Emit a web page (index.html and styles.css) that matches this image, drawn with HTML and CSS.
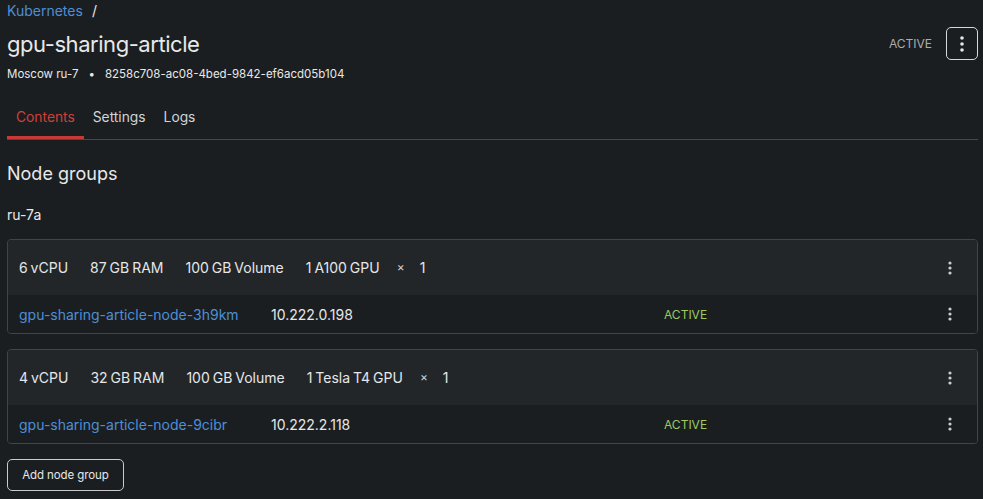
FILE: index.html
```html
<!DOCTYPE html>
<html>
<head>
<meta charset="utf-8">
<link rel="stylesheet" href="styles.css">
</head>
<body>
<div class="page">
  <div class="crumbs"><a class="crumb-link">Kubernetes</a><span class="sep">/</span></div>
  <div class="head">
    <div class="head-left">
      <h1 class="title">gpu-sharing-article</h1>
      <div class="meta"><span>Moscow ru-7</span><span class="dot">•</span><span>8258c708-ac08-4bed-9842-ef6acd05b104</span></div>
    </div>
    <div class="head-right">
      <span class="status">ACTIVE</span>
      <button class="kebab-btn"><svg width="4" height="16" viewBox="0 0 4 16"><circle cx="2" cy="2" r="1.8" fill="#e6e6e6"/><circle cx="2" cy="8" r="1.8" fill="#e6e6e6"/><circle cx="2" cy="14" r="1.8" fill="#e6e6e6"/></svg></button>
    </div>
  </div>
  <nav class="tabs">
    <span class="tab active">Contents</span>
    <span class="tab">Settings</span>
    <span class="tab">Logs</span>
  </nav>
  <h2 class="section">Node groups</h2>
  <div class="zone">ru-7a</div>

  <div class="card">
    <div class="card-head">
      <div class="specs"><span>6 vCPU</span><span>87 GB RAM</span><span>100 GB Volume</span><span>1 A100 GPU</span><span class="x">×</span><span>1</span></div>
      <span class="kebab"><svg width="4" height="14" viewBox="0 0 4 14"><circle cx="2" cy="2" r="1.6" fill="#c9cdd0"/><circle cx="2" cy="7" r="1.6" fill="#c9cdd0"/><circle cx="2" cy="12" r="1.6" fill="#c9cdd0"/></svg></span>
    </div>
    <div class="node-row">
      <a class="node-link">gpu-sharing-article-node-3h9km</a>
      <span class="ip">10.222.0.198</span>
      <span class="node-status">ACTIVE</span>
      <span class="kebab"><svg width="4" height="14" viewBox="0 0 4 14"><circle cx="2" cy="2" r="1.6" fill="#c9cdd0"/><circle cx="2" cy="7" r="1.6" fill="#c9cdd0"/><circle cx="2" cy="12" r="1.6" fill="#c9cdd0"/></svg></span>
    </div>
  </div>

  <div class="card">
    <div class="card-head">
      <div class="specs"><span>4 vCPU</span><span>32 GB RAM</span><span>100 GB Volume</span><span>1 Tesla T4 GPU</span><span class="x">×</span><span>1</span></div>
      <span class="kebab"><svg width="4" height="14" viewBox="0 0 4 14"><circle cx="2" cy="2" r="1.6" fill="#c9cdd0"/><circle cx="2" cy="7" r="1.6" fill="#c9cdd0"/><circle cx="2" cy="12" r="1.6" fill="#c9cdd0"/></svg></span>
    </div>
    <div class="node-row">
      <a class="node-link">gpu-sharing-article-node-9cibr</a>
      <span class="ip">10.222.2.118</span>
      <span class="node-status">ACTIVE</span>
      <span class="kebab"><svg width="4" height="14" viewBox="0 0 4 14"><circle cx="2" cy="2" r="1.6" fill="#c9cdd0"/><circle cx="2" cy="7" r="1.6" fill="#c9cdd0"/><circle cx="2" cy="12" r="1.6" fill="#c9cdd0"/></svg></span>
    </div>
  </div>

  <button class="add-btn">Add node group</button>
</div>
</body>
</html>
```

FILE: styles.css
```css
* { box-sizing: border-box; }
html, body { margin: 0; padding: 0; background: #1b1e21; }
body {
  font-family: Inter, "Noto Sans", sans-serif;
  color: #e8e9ea;
}
.page { padding: 0 5px 0 7px; }

.crumbs {
  font-size: 14px;
  line-height: 20px;
  height: 20px;
  margin-top: 1px;
  display: flex;
  gap: 9px;
}
.crumb-link { color: #4d8fd6; }
.sep { color: #e8e9ea; }

.head {
  display: flex;
  justify-content: space-between;
  align-items: flex-start;
  margin-top: 6px;
}
.title {
  margin: 0;
  font-size: 22px;
  font-weight: 400;
  line-height: 35px;
  letter-spacing: -0.45px;
}
.meta {
  font-size: 11.5px;
  line-height: 16px;
  margin-top: 4px;
  display: flex;
  gap: 10px;
}
.head-right {
  display: flex;
  align-items: center;
  gap: 14px;
}
.status { font-size: 12px; color: #a9adb0; }
.kebab-btn {
  width: 32px;
  height: 33px;
  border: 1px solid #d6d8da;
  border-radius: 5px;
  background: transparent;
  display: flex;
  align-items: center;
  justify-content: center;
  padding: 0;
}

.tabs {
  display: flex;
  margin-top: 20px;
  border-bottom: 1px solid #44494d;
}
.tab {
  font-size: 13.8px;
  line-height: 20px;
  padding: 5px 9px 12px 9px;
  color: #d2d4d6;
}
.tab.active {
  color: #d0403a;
  box-shadow: inset 0 -3px 0 #c63a35;
}

.section {
  margin: 22px 0 0 0;
  font-size: 18px;
  font-weight: 400;
  line-height: 24px;
}
.zone {
  font-size: 14px;
  line-height: 20px;
  margin-top: 19px;
}

.card {
  margin-top: 14px;
  border: 1px solid #3f4549;
  border-radius: 4px;
  overflow: hidden;
}
.card + .card { margin-top: 15px; }
.card-head {
  background: #222629;
  height: 55px;
  display: flex;
  align-items: center;
  justify-content: space-between;
  padding: 0 25px 0 11px;
}
.specs {
  display: flex;
  gap: 22px;
  font-size: 14px;
  word-spacing: -1px;
  color: #e6e7e8;
}
.specs .x { font-size: 12px; margin: 0 -7px 0 -5px; color: #cfd1d3; }
.kebab { display: flex; align-items: center; }
.node-row {
  height: 38px;
  background: #1b1e21;
  display: grid;
  grid-template-columns: 252px 393px 1fr auto;
  align-items: center;
  padding: 0 25px 0 11px;
  font-size: 14px;
}
.node-link { color: #4d8fd6; }
.ip { color: #e6e7e8; }
.node-status { color: #9dcb5e; font-size: 12px; }

.add-btn {
  margin-top: 15px;
  height: 32px;
  width: 117px;
  border: 1px solid #c9cbcd;
  border-radius: 5px;
  background: transparent;
  color: #e6e7e8;
  font-family: Inter, "Noto Sans", sans-serif;
  font-size: 11.5px;
  letter-spacing: -0.1px;
  padding: 0;
}
```
